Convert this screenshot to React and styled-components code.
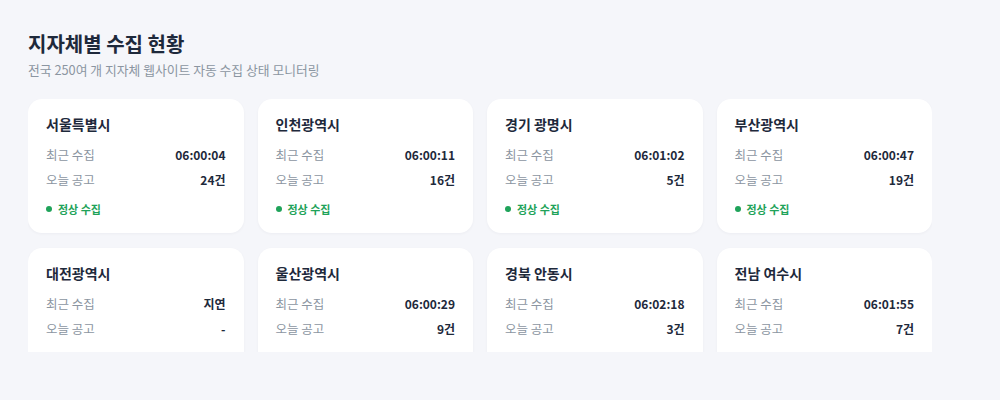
import React from "react";
import styled, { createGlobalStyle } from "styled-components";

const regions = [
  { name: "서울특별시", last: "06:00:04", count: "24건", ok: true },
  { name: "인천광역시", last: "06:00:11", count: "16건", ok: true },
  { name: "경기 광명시", last: "06:01:02", count: "5건", ok: true },
  { name: "부산광역시", last: "06:00:47", count: "19건", ok: true },
  { name: "대전광역시", last: "지연", count: "-", ok: false },
  { name: "울산광역시", last: "06:00:29", count: "9건", ok: true },
  { name: "경북 안동시", last: "06:02:18", count: "3건", ok: true },
  { name: "전남 여수시", last: "06:01:55", count: "7건", ok: true },
];

const GlobalStyle = createGlobalStyle`
  body {
    margin: 0;
    background: #f5f6fa;
    font-family: "Noto Sans CJK KR", "Noto Sans", sans-serif;
    color: #1e293b;
  }
`;

const Page = styled.div`
  padding: 30px 28px 0;
  height: 400px;
  box-sizing: border-box;
`;

const Title = styled.h1`
  margin: 0;
  font-size: 20px;
  line-height: 28px;
  font-weight: 700;
  color: #1e293b;
`;

const Subtitle = styled.p`
  margin: 3px 0 0;
  font-size: 12.8px;
  line-height: 18px;
  color: #8b95a1;
`;

const GridClip = styled.div`
  margin-top: 20px;
  height: 253px;
  width: 904px;
  overflow: hidden;
`;

const Grid = styled.div`
  display: grid;
  grid-template-columns: repeat(4, 1fr);
  column-gap: 14px;
  row-gap: 15px;
`;

const Card = styled.div`
  background: #ffffff;
  border-radius: 14px;
  padding: 15px 18px 16px;
  box-shadow: 0 1px 3px rgba(15, 23, 42, 0.04);
`;

const CardName = styled.div`
  font-size: 14px;
  line-height: 20px;
  font-weight: 700;
  color: #1e293b;
  margin-bottom: 10px;
`;

const Row = styled.div`
  display: flex;
  justify-content: space-between;
  align-items: center;
  font-size: 12px;
  line-height: 22px;
  & + & {
    margin-top: 3px;
  }
`;

const Label = styled.span`
  font-size: 12.5px;
  color: #8b95a1;
`;

const Value = styled.span`
  font-weight: 700;
  color: #1e293b;
`;

const Status = styled.div`
  display: flex;
  align-items: center;
  gap: 6px;
  margin-top: 10px;
  font-size: 11px;
  line-height: 16px;
  font-weight: 700;
  color: ${(p) => p.$color};
`;

const Dot = styled.span`
  width: 6px;
  height: 6px;
  border-radius: 50%;
  background: ${(p) => p.$color};
`;

export default function App() {
  return (
    <>
      <GlobalStyle />
      <Page>
        <Title>지자체별 수집 현황</Title>
        <Subtitle>전국 250여 개 지자체 웹사이트 자동 수집 상태 모니터링</Subtitle>
        <GridClip>
          <Grid>
            {regions.map((r) => (
              <Card key={r.name}>
                <CardName>{r.name}</CardName>
                <Row>
                  <Label>최근 수집</Label>
                  <Value>{r.last}</Value>
                </Row>
                <Row>
                  <Label>오늘 공고</Label>
                  <Value>{r.count}</Value>
                </Row>
                {r.ok ? (
                  <Status $color="#1fa35a">
                    <Dot $color="#1fa35a" />
                    정상 수집
                  </Status>
                ) : (
                  <Status $color="#e0892b">
                    <Dot $color="#e0892b" />
                    수집 지연
                  </Status>
                )}
              </Card>
            ))}
          </Grid>
        </GridClip>
      </Page>
    </>
  );
}
